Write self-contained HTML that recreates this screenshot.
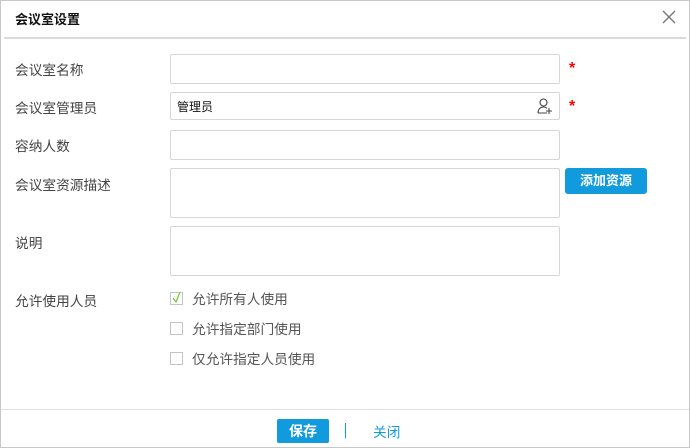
<!DOCTYPE html>
<html><head><meta charset="utf-8"><style>
body{margin:0;width:690px;height:448px;overflow:hidden;background:#fff;font-family:"Liberation Sans","Noto Sans CJK SC",sans-serif;font-size:13px;color:#333;}
.frame{position:absolute;left:0;top:0;width:688px;height:446px;border:1px solid #c8c8c8;}
.title{position:absolute;left:15px;top:9px;font-size:13px;font-weight:bold;color:#111;}
.hr{position:absolute;left:4px;top:37px;width:682px;height:2px;background:#dadada;}
.x{position:absolute;left:661px;top:9px;}
.lbl{position:absolute;left:15px;font-size:13.7px;color:#444;}
.inp{position:absolute;left:170px;width:388px;border:1px solid #d6d6d6;border-radius:2px;background:#fff;}
.star{position:absolute;left:569px;color:#f00;font-size:16px;font-weight:bold;}
.btn{position:absolute;left:565px;top:168px;width:82px;height:26px;background:#129bdc;border-radius:3px;color:#fff;font-weight:bold;text-align:center;line-height:26px;}
.cb{position:absolute;left:170px;width:11px;height:11px;border:1px solid #c4c4c4;}
.ct{position:absolute;left:192px;color:#555;font-size:13.7px;}
.fl{position:absolute;left:1px;top:409px;width:688px;height:1px;background:#e0e0e0;}
.save{position:absolute;left:277px;top:419px;width:52px;height:24px;background:#129bdc;border-radius:2px;color:#fff;font-weight:bold;text-align:center;line-height:24px;font-size:14px;}
</style></head><body>
<div class="frame"></div>
<div class="title">会议室设置</div>
<svg class="x" width="16" height="16"><path d="M2 2L14 14M14 2L2 14" stroke="#777" stroke-width="1.4"/></svg>
<div class="hr"></div>
<div class="lbl" style="top:59px">会议室名称</div>
<div class="inp" style="top:54px;height:28px"></div>
<div class="star" style="top:60px">*</div>
<div class="lbl" style="top:97px">会议室管理员</div>
<div class="inp" style="top:92px;height:26px"><span style="position:absolute;left:6px;top:5px;font-size:12px;color:#111">管理员</span>
<svg style="position:absolute;left:366px;top:5px" width="16" height="16" viewBox="0 0 16 16" fill="none" stroke="#444" stroke-width="1.1"><circle cx="6.5" cy="4.5" r="3.5"/><path d="M1 15C1 11 3.5 9 6.5 9C8 9 9 9.5 10 10.2M1 15H10M12 10V16M9 13H15"/></svg></div>
<div class="star" style="top:98px">*</div>
<div class="lbl" style="top:135px">容纳人数</div>
<div class="inp" style="top:130px;height:28px"></div>
<div class="lbl" style="top:174px">会议室资源描述</div>
<div class="inp" style="top:168px;height:48px"></div>
<div class="btn">添加资源</div>
<div class="lbl" style="top:232px">说明</div>
<div class="inp" style="top:226px;height:48px"></div>
<div class="lbl" style="top:290px">允许使用人员</div>
<div class="cb" style="top:292px"><svg width="11" height="11" style="position:absolute;left:1px;top:-1px"><path d="M1 6L4 10L8 0" stroke="#6c3" stroke-width="1.2" fill="none"/></svg></div>
<div class="ct" style="top:288px">允许所有人使用</div>
<div class="cb" style="top:322px"></div>
<div class="ct" style="top:318px">允许指定部门使用</div>
<div class="cb" style="top:352px"></div>
<div class="ct" style="top:348px">仅允许指定人员使用</div>
<div class="fl"></div>
<div class="save">保存</div>
<div style="position:absolute;left:345px;top:423px;width:1px;height:15px;background:#129bdc"></div>
<div style="position:absolute;left:373px;top:421px;color:#129bdc;font-size:13.7px">关闭</div>
</body></html>
